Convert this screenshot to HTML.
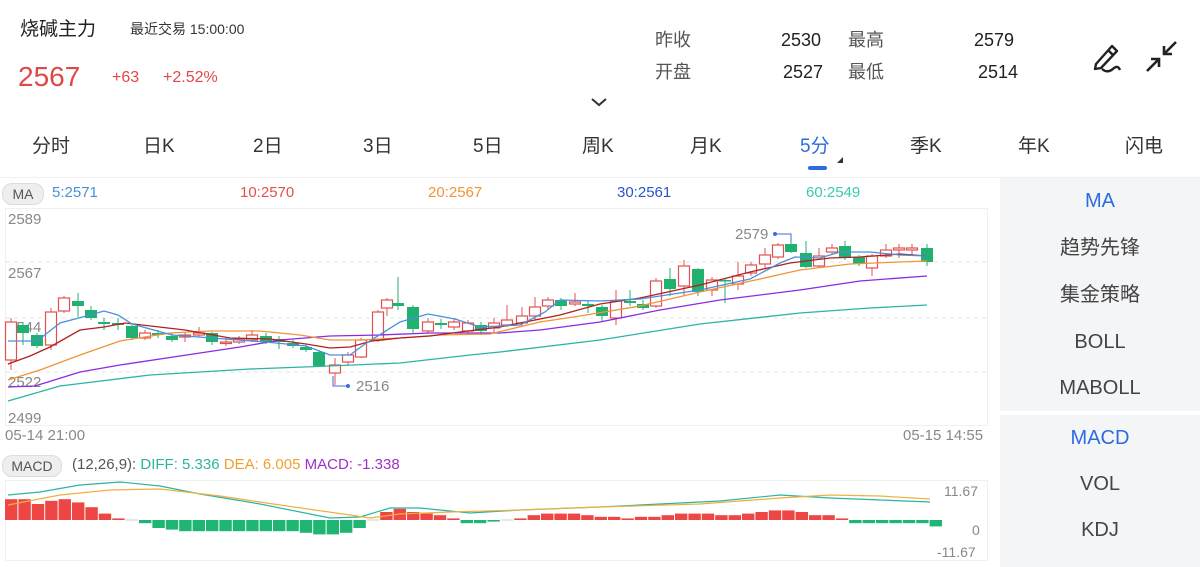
<!DOCTYPE html><html><head><meta charset="utf-8"><style>
body{margin:0;width:1200px;height:567px;overflow:hidden;background:#fff;font-family:"Liberation Sans","Noto Sans CJK SC",sans-serif;position:relative;color:#333}
.a{position:absolute;white-space:nowrap;line-height:24px}
.tab{position:absolute;top:135px;font-size:19px;color:#333;line-height:24px}
.side{position:absolute;left:1000px;width:200px;text-align:center;font-size:20px;color:#444;line-height:24px}
</style></head><body>
<div class="a" style="left:20px;top:18px;font-size:19px;color:#222">烧碱主力</div>
<div class="a" style="left:130px;top:17px;font-size:14px;color:#333">最近交易 15:00:00</div>
<div class="a" style="left:18px;top:65px;font-size:28px;color:#e04848">2567</div>
<div class="a" style="left:112px;top:66px;font-size:16px;color:#e04848">+63</div>
<div class="a" style="left:163px;top:66px;font-size:16px;color:#e04848">+2.52%</div>
<div class="a" style="left:655px;top:28px;font-size:18px;color:#555">昨收</div>
<div class="a" style="left:781px;top:28px;font-size:18px;color:#222">2530</div>
<div class="a" style="left:848px;top:28px;font-size:18px;color:#555">最高</div>
<div class="a" style="left:974px;top:28px;font-size:18px;color:#222">2579</div>
<div class="a" style="left:655px;top:60px;font-size:18px;color:#555">开盘</div>
<div class="a" style="left:783px;top:60px;font-size:18px;color:#222">2527</div>
<div class="a" style="left:848px;top:60px;font-size:18px;color:#555">最低</div>
<div class="a" style="left:978px;top:60px;font-size:18px;color:#222">2514</div>
<svg class="a" style="left:590px;top:97px" width="18" height="10"><path d="M2 2 L9 8 L16 2" fill="none" stroke="#333" stroke-width="2"/></svg>
<svg class="a" style="left:1088px;top:38px" width="40" height="40"><path d="M8 26 L24 8 L29 13 L13 30 L7 31 Z M20 12 L25 17" fill="none" stroke="#222" stroke-width="2.4" stroke-linejoin="round"/><path d="M14 31 Q20 36 26 30 Q30 27 32 32" fill="none" stroke="#222" stroke-width="2.4"/></svg>
<svg class="a" style="left:1142px;top:38px" width="40" height="40"><path d="M34 4 L23 15 M22 8 L22 16 L30 16" fill="none" stroke="#222" stroke-width="2.6"/><path d="M5 33 L16 22 M17 29 L17 21 L9 21" fill="none" stroke="#222" stroke-width="2.6"/></svg>
<div class="tab" style="left:32px">分时</div><div class="tab" style="left:143px">日K</div><div class="tab" style="left:253px">2日</div><div class="tab" style="left:363px">3日</div><div class="tab" style="left:473px">5日</div><div class="tab" style="left:582px">周K</div><div class="tab" style="left:690px">月K</div><div class="tab" style="left:800px;color:#2d6be0">5分</div><div class="tab" style="left:910px">季K</div><div class="tab" style="left:1018px">年K</div><div class="tab" style="left:1125px">闪电</div>
<svg class="a" style="left:836px;top:156px" width="8" height="8"><path d="M7 1 L7 7 L1 7Z" fill="#333"/></svg>
<div class="a" style="left:808px;top:166px;width:19px;height:4px;border-radius:2px;background:#2d6be0"></div>
<div class="a" style="left:0;top:177px;width:1200px;height:1px;background:#f0f0f0"></div>
<div class="a" style="left:1000px;top:178px;width:200px;height:389px;background:#f4f5f7"></div>
<div class="a" style="left:1000px;top:411px;width:200px;height:4px;background:#fff"></div>
<div class="side" style="top:189px;color:#2d6be0">MA</div>
<div class="side" style="top:236px">趋势先锋</div>
<div class="side" style="top:283px">集金策略</div>
<div class="side" style="top:330px">BOLL</div>
<div class="side" style="top:376px">MABOLL</div>
<div class="side" style="top:426px;color:#2d6be0">MACD</div>
<div class="side" style="top:472px">VOL</div>
<div class="side" style="top:518px">KDJ</div>
<div class="a" style="left:2px;top:183px;width:40px;height:20px;border-radius:10px;background:#eee;border:1px solid #ddd;font-size:14px;color:#555;text-align:center;line-height:20px">MA</div>
<div class="a" style="left:52px;top:181px;font-size:15px;color:#4a90d9">5:2571</div>
<div class="a" style="left:240px;top:181px;font-size:15px;color:#e05050">10:2570</div>
<div class="a" style="left:428px;top:181px;font-size:15px;color:#f0943a">20:2567</div>
<div class="a" style="left:617px;top:181px;font-size:15px;color:#2a55c8">30:2561</div>
<div class="a" style="left:806px;top:181px;font-size:15px;color:#3cc9b0">60:2549</div>
<div class="a" style="left:2px;top:455px;width:58px;height:20px;border-radius:10px;background:#eee;border:1px solid #ddd;font-size:14px;color:#555;text-align:center;line-height:20px">MACD</div>
<div class="a" style="left:72px;top:453px;font-size:15px;color:#555">(12,26,9): <span style="color:#2bb5a0">DIFF: 5.336</span> <span style="color:#f0a030">DEA: 6.005</span> <span style="color:#a030c8">MACD: -1.338</span></div>
<div class="a" style="left:5px;top:424px;font-size:15px;color:#888">05-14 21:00</div>
<div class="a" style="left:903px;top:424px;font-size:15px;color:#888">05-15 14:55</div>
<div class="a" style="left:944px;top:479px;font-size:14px;color:#888">11.67</div>
<div class="a" style="left:972px;top:518px;font-size:14px;color:#888">0</div>
<div class="a" style="left:937px;top:540px;font-size:14px;color:#888">-11.67</div>
<svg class="a" style="left:0;top:0;line-height:normal" width="1000" height="567" id="s">
<rect x="5.5" y="208.5" width="982" height="217" fill="none" stroke="#f0f0f0"/>
<rect x="5.5" y="480.5" width="982" height="80" fill="none" stroke="#f0f0f0"/>
<g stroke="#e4e4e4" stroke-dasharray="4 4"><line x1="6" y1="262" x2="987" y2="262"/><line x1="6" y1="318" x2="987" y2="318"/><line x1="6" y1="372" x2="987" y2="372"/></g>
<g font-size="15" fill="#888" font-family="Liberation Sans"><text x="8" y="224">2589</text><text x="8" y="278">2567</text><text x="8" y="332">2544</text><text x="8" y="387">2522</text><text x="8" y="423">2499</text><text x="356" y="391">2516</text><text x="735" y="239">2579</text></g>
<path d="M333 376 L333 386 L348 386" fill="none" stroke="#3a6fd8"/><circle cx="348" cy="386" r="2" fill="#3a6fd8"/>
<path d="M775 234 L791 234 L791 244" fill="none" stroke="#3a6fd8"/><circle cx="775" cy="234" r="2" fill="#3a6fd8"/>
<g id="c"></g>
<g fill="none" stroke-width="1.3">
<polyline stroke="#2bb5a0" points="8,401 60,386 150,375 250,369 330,366 400,363 470,355 500,352 600,340 700,324 800,313 870,308 927,305"/>
<polyline stroke="#8a2be2" points="8,387 35,386 80,372 120,365 180,356 240,347 280,340 330,336 380,335 430,333 500,333 540,330 600,322 660,310 720,300 800,290 860,281 927,276"/>
<polyline stroke="#f0943a" points="8,380 40,370 80,355 120,341 170,333 210,331 260,331 300,335 330,340 360,340 400,338 440,335 490,334 540,322 580,316 640,306 700,292 760,279 800,270 850,264 900,262 927,261"/>
<polyline stroke="#b02020" points="8,364 30,356 50,347 80,330 104,327 125,323 185,330 230,338 270,339 306,344 330,348 350,347 372,341 400,338 430,336 460,332 500,327 560,315 600,304 640,298 700,285 750,272 790,263 830,258 860,257 900,254 927,256"/>
<polyline stroke="#4a90d9" points="8,341 37,341 60,323 90,315 104,311 118,315 132,324 172,335 212,338 266,342 306,346 330,355 350,355 365,344 400,322 428,314 455,319 480,327 500,326 520,325 545,312 560,300 600,301 640,299 700,290 750,279 780,263 795,257 820,258 840,252 870,252 900,255 927,256"/>
</g>
<g id="m"></g>
<polyline fill="none" stroke="#2bb5a0" stroke-width="1.2" points="8,495 40,492 80,485 120,482 160,486 200,494 260,504 330,518 360,517 390,508 420,508 470,513 520,510 600,507 680,503 720,501 780,495 830,498 880,500 930,502"/>
<polyline fill="none" stroke="#f0b040" stroke-width="1.2" points="8,505 60,495 110,490 160,489 220,496 280,505 350,515 370,518 400,514 450,512 520,510 600,507 700,504 780,498 830,495 880,496 930,499"/>
</svg>
<script>
var C=[[11,322,360,318,370,'r'],[23,325,333,322,345,'g'],[37,335,346,333,348,'g'],[51,312,345,308,350,'r'],[64,298,311,296,313,'r'],[78,301,306,293,317,'g'],[91,310,318,306,320,'g'],[104,322,324,318,330,'g'],[118,323,325,318,330,'g'],[132,326,338,325,340,'g'],[145,333,338,330,340,'r'],[158,333,335,330,338,'g'],[172,336,340,333,342,'g'],[185,335,337,333,342,'r'],[199,333,335,327,337,'r'],[212,333,342,332,345,'g'],[226,342,343,338,346,'r'],[239,339,342,336,344,'r'],[252,335,340,330,342,'r'],[266,336,342,333,344,'g'],[279,339,342,336,349,'g'],[293,343,346,340,348,'g'],[306,347,350,345,352,'g'],[319,352,366,350,367,'g'],[335,365,373,358,385,'r'],[348,355,362,352,365,'r'],[361,340,357,338,358,'r'],[378,312,340,310,342,'r'],[387,300,308,298,316,'r'],[398,303,306,277,310,'g'],[413,307,329,305,333,'g'],[428,322,331,318,333,'r'],[441,323,325,319,329,'g'],[454,322,327,319,330,'r'],[468,323,331,320,334,'r'],[481,325,331,322,335,'g'],[494,323,328,318,333,'r'],[507,320,325,305,327,'r'],[522,316,323,307,326,'r'],[535,307,316,297,320,'r'],[548,300,306,297,310,'r'],[561,300,306,298,310,'g'],[575,302,304,293,306,'r'],[588,304,306,300,313,'g'],[602,307,316,305,321,'g'],[616,301,318,290,325,'r'],[630,301,303,290,306,'g'],[643,304,308,300,310,'g'],[656,281,306,278,308,'r'],[670,279,289,268,296,'g'],[684,266,286,260,295,'r'],[698,269,292,268,296,'g'],[712,280,290,277,296,'r'],[725,280,281,278,303,'g'],[738,276,284,262,290,'r'],[751,265,273,262,276,'r'],[765,255,264,248,268,'r'],[778,245,257,243,259,'r'],[791,244,252,242,253,'g'],[806,253,267,241,268,'g'],[819,256,266,248,268,'r'],[832,248,252,244,254,'r'],[845,246,258,241,260,'g'],[859,257,264,255,266,'g'],[872,256,268,254,276,'r'],[886,250,256,244,258,'r'],[899,248,250,244,258,'r'],[912,248,250,244,256,'r'],[927,248,262,244,266,'g']];
var h='';C.forEach(function(c){var col=c[5]=='r'?'#e05050':'#20b070';h+='<line x1="'+c[0]+'" x2="'+c[0]+'" y1="'+c[3]+'" y2="'+c[4]+'" stroke="'+col+'"/>';var bh=Math.max(c[2]-c[1],1.5);if(c[5]=='r')h+='<rect x="'+(c[0]-5.5)+'" y="'+c[1]+'" width="11" height="'+bh+'" fill="#fff" stroke="'+col+'" stroke-width="1.2"/>';else h+='<rect x="'+(c[0]-6)+'" y="'+c[1]+'" width="12" height="'+bh+'" fill="'+col+'"/>';});
document.getElementById('c').innerHTML=h;
var B=[13,13,10,12,13,11,8,4,1,0,-2,-5,-6,-7,-7,-7,-7,-7,-7,-7,-7,-7,-8,-9,-9,-8,-5,0,5,7,5,4,3,1,-2,-2,-1,0,1,3,4,4,4,3,2,2,1,2,2,3,4,4,4,3,3,4,5,6,6,5,3,3,1,-2,-2,-2,-2,-2,-2,-4];
var s='',z=520;B.forEach(function(v,i){var x=5+i*13.4;if(v>0)s+='<rect x="'+x+'" y="'+(z-v*1.6)+'" width="12.4" height="'+(v*1.6)+'" fill="#ee4545"/>';else if(v<0)s+='<rect x="'+x+'" y="'+z+'" width="12.4" height="'+(-v*1.6)+'" fill="#1fb573"/>';else s+='<rect x="'+x+'" y="'+(z-0.5)+'" width="12.4" height="1" fill="#ccc"/>';});
document.getElementById('m').innerHTML=s;
</script>
</body></html>
